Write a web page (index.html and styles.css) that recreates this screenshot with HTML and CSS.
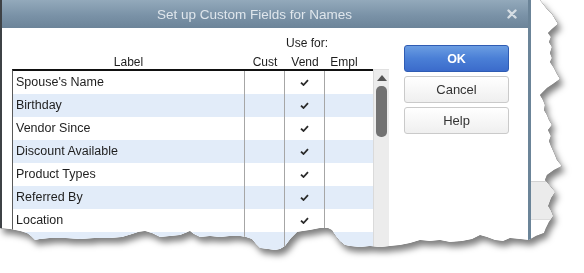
FILE: index.html
```html
<!DOCTYPE html>
<html lang="en">
<head>
    <meta charset="UTF-8">
    <title>Set up Custom Fields for Names</title>
    <link rel="stylesheet" href="styles.css">
</head>
<body>

    <div class="page">
        <div class="sheet">

            <!-- Dialog -->
            <div class="dialog">
                <div class="titlebar">
                    <span class="title">Set up Custom Fields for Names</span>
                    <svg class="close" width="10" height="10" viewBox="0 0 10 10">
                        <path d="M1.5 1.5 L8.5 8.5 M8.5 1.5 L1.5 8.5" stroke="#d5dde4" stroke-width="2.4" stroke-linecap="round"/>
                    </svg>
                </div>

                <div class="dialog-body">
                    <div class="fields">
                        <div class="use-for">Use for:</div>
                        <div class="col-heads">
                            <span class="head-label">Label</span>
                            <span class="head-col">Cust</span>
                            <span class="head-col">Vend</span>
                            <span class="head-col head-empl">Empl</span>
                        </div>

                        <div class="list">
                            <div class="rows" id="rows"></div>
                            <div class="scrollbar">
                                <span class="arrow"></span>
                                <span class="thumb"></span>
                            </div>
                        </div>
                    </div>

                    <div class="buttons">
                        <button class="btn btn-ok">OK</button>
                        <button class="btn">Cancel</button>
                        <button class="btn">Help</button>
                    </div>
                </div>
            </div>

            <!-- Window behind the dialog -->
            <div class="behind">
                <div class="behind-bar"></div>
            </div>

        </div>
    </div>

    <script>
        const fields = [
            "Spouse's Name", "Birthday", "Vendor Since", "Discount Available",
            "Product Types", "Referred By", "Location", ""
        ];
        const check = '<svg width="9" height="7" viewBox="0 0 9 7"><path d="M1 3.6 L3.5 6 L8 1.2" fill="none" stroke="#2b2b2b" stroke-width="1.8"/></svg>';

        const rows = document.getElementById("rows");
        fields.forEach(name => {
            const row = document.createElement("div");
            row.className = "row";
            row.innerHTML =
                '<span class="cell cell-label"></span>' +
                '<span class="cell cell-box"></span>' +
                '<span class="cell cell-box">' + (name ? check : "") + '</span>' +
                '<span class="cell cell-empl"></span>';
            row.querySelector(".cell-label").textContent = name;
            rows.appendChild(row);
        });
    </script>

</body>
</html>
```

FILE: styles.css
```css
* {
    margin: 0;
    padding: 0;
    box-sizing: border-box;
}

body {
    font-family: "Liberation Sans", Arial, sans-serif;
    background-color: #ffffff;
    color: #1e1e1e;
    width: 584px;
    height: 273px;
    overflow: hidden;
}

/* Torn paper */
.page {
    width: 584px;
    height: 273px;
    filter: drop-shadow(0 0 0.6px #1a1a1a) drop-shadow(3px 5px 3px rgba(0, 0, 0, 0.5));
}

.sheet {
    width: 584px;
    height: 273px;
    display: flex;
    background: #ffffff;
    clip-path: polygon(
        0 0, 540px 0, 543px 4px, 547px 9px, 552px 14px, 555px 19px, 558px 24px, 552px 29px,
        548px 33px, 551px 37px, 549px 42px, 552px 47px, 550px 53px, 552px 58px, 550px 62px,
        554px 68px, 557px 74px, 560px 79px, 553px 84px, 547px 88px, 543px 92px, 540px 95px,
        543px 100px, 545px 105px, 544px 110px, 547px 115px, 549px 120px, 552px 125px, 548px 130px,
        551px 136px, 549px 141px, 551px 146px, 555px 155px, 557px 160px, 562px 166px, 554px 170px,
        547px 175px, 545px 180px, 550px 186px, 555px 192px, 551px 198px, 548px 206px, 551px 211px,
        553px 216px, 549px 222px, 546px 228px, 544px 233px, 536px 236px, 529px 240px,
        520px 239px, 510px 238px, 503px 241px, 495px 240px, 487px 237px, 480px 235px, 472px 239px,
        462px 241px, 450px 242px, 440px 240px, 430px 241px, 420px 240px, 410px 243px, 400px 245px,
        390px 246px, 380px 247px, 370px 246px, 360px 247px, 350px 246px, 345px 245px, 340px 241px,
        336px 236px, 332px 230px, 328px 228px, 320px 228px, 315px 229px, 310px 230px, 303px 231px,
        297px 232px, 291px 238px, 285px 246px, 280px 249px, 275px 250px, 268px 249px, 260px 248px,
        256px 244px, 252px 239px, 246px 237px, 240px 236px, 230px 236px, 220px 237px, 210px 236px,
        200px 237px, 194px 234px, 190px 231px, 185px 233px, 180px 235px, 170px 236px, 160px 237px,
        152px 233px, 145px 231px, 138px 232px, 132px 234px, 122px 237px, 110px 238px, 95px 238px,
        80px 239px, 65px 238px, 50px 238px, 40px 239px, 35px 240px, 31px 236px, 27px 233px,
        20px 231px, 10px 229px, 0 228px
    );
}

/* Dialog */
.dialog {
    width: 531px;
    height: 273px;
    display: flex;
    flex-direction: column;
    border-left: 2px solid #3e4246;
    border-right: 3px solid #6b8498;
    background: #ffffff;
}

.titlebar {
    height: 28px;
    display: flex;
    align-items: center;
    padding: 0 11px 0 0;
    background: linear-gradient(to bottom, #93a9bb, #7a92a7 55%, #6c8499);
}

.title {
    flex-grow: 1;
    text-align: center;
    font-size: 13.5px;
    color: #dfe6ec;
}

.close {
    display: block;
}

.dialog-body {
    flex-grow: 1;
    display: flex;
}

/* Field list */
.fields {
    padding-left: 10px;
    width: 387px;
    display: flex;
    flex-direction: column;
}

.use-for {
    margin-top: 8px;
    height: 14px;
    line-height: 14px;
    font-size: 12px;
    padding-left: 274px;
}

.col-heads {
    display: flex;
    height: 19px;
    padding-top: 5px;
    line-height: 14px;
    font-size: 12px;
}

.head-label {
    width: 233px;
    text-align: center;
}

.head-col {
    width: 40px;
    text-align: center;
}

.head-empl {
    width: 38px;
}

.list {
    flex-grow: 1;
    display: flex;
}

.rows {
    width: 361px;
    border-top: 2px solid #111111;
    border-left: 1px solid #5a5a5a;
}

.row {
    display: flex;
    height: 23px;
    font-size: 12.5px;
}

.row:nth-child(even) {
    background: #e2ecf9;
}

.cell {
    display: flex;
    align-items: center;
    justify-content: center;
    border-right: 1px solid #a6a6a6;
}

.cell-label {
    width: 232px;
    justify-content: flex-start;
    padding: 0 0 2px 3px;
}

.cell-box {
    width: 40px;
}

.cell-empl {
    flex-grow: 1;
    border-right: none;
}

.scrollbar {
    width: 16px;
    background: #ececec;
    border-left: 1px solid #dadada;
    border-top: 1px solid #e0e0e0;
    display: flex;
    flex-direction: column;
    align-items: center;
    padding-top: 5px;
}

.arrow {
    width: 0;
    height: 0;
    border-left: 5px solid transparent;
    border-right: 5px solid transparent;
    border-bottom: 6px solid #555555;
}

.thumb {
    margin-top: 5px;
    width: 11px;
    height: 51px;
    border-radius: 5px;
    background: #727272;
}

/* Buttons */
.buttons {
    margin: 17px 0 0 15px;
    width: 105px;
    display: flex;
    flex-direction: column;
    gap: 4px;
}

.btn {
    height: 27px;
    font-family: "Liberation Sans", Arial, sans-serif;
    font-size: 13px;
    color: #333333;
    border: 1px solid #cacaca;
    border-radius: 3px;
    background: linear-gradient(to bottom, #ffffff, #efefef);
}

.btn-ok {
    font-weight: bold;
    font-size: 12.5px;
    color: #ffffff;
    border-color: #2f5cb3;
    background: linear-gradient(to bottom, #6b9de2, #4a7fd6 50%, #3b6bcb);
}

/* Window behind */
.behind {
    flex-grow: 1;
    display: flex;
    flex-direction: column;
    padding-top: 181px;
}

.behind-bar {
    height: 39px;
    background: #ebebeb;
    border-top: 1px solid #d2d2d2;
    border-bottom: 1px solid #dcdcdc;
}
```
